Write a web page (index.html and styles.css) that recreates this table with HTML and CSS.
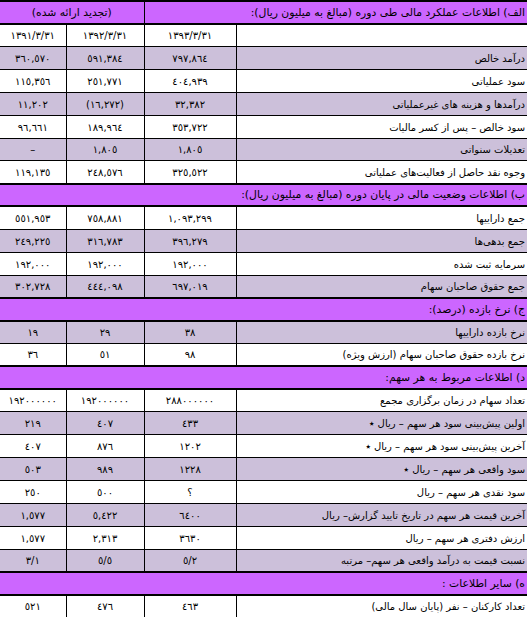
FILE: index.html
```html
<!DOCTYPE html>
<html lang="fa">
<head>
<meta charset="utf-8">
<title>گزارش مالی</title>
<link rel="stylesheet" href="styles.css">
</head>
<body>
<table class="sheet" dir="rtl">
  <colgroup>
    <col class="c-label">
    <col class="c-y1">
    <col class="c-y2">
    <col class="c-y3">
  </colgroup>
  <tbody>
    <tr class="hd first">
      <td colspan="2" class="lbl">الف) اطلاعات عملکرد مالی طی دوره (مبالغ به میلیون ریال):</td>
      <td colspan="2" class="num">(تجدید ارائه شده)</td>
    </tr>
    <tr class="row">
      <td class="lbl"></td><td class="num">١٣٩٣/٣/٣١</td><td class="num">١٣٩٢/٣/٣١</td><td class="num">١٣٩١/٣/٣١</td>
    </tr>
    <tr class="row alt">
      <td class="lbl">درآمد خالص</td><td class="num">٧٩٧,٨٦٤</td><td class="num">٥٩١,٣٨٤</td><td class="num">٣٦٠,٥٧٠</td>
    </tr>
    <tr class="row">
      <td class="lbl">سود عملیاتی</td><td class="num">٤٠٤,٩٣٩</td><td class="num">٢٥١,٧٧١</td><td class="num">١١٥,٣٥٦</td>
    </tr>
    <tr class="row alt">
      <td class="lbl">درآمدها و هزینه های غیرعملیاتی</td><td class="num">٣٢,٣٨٢</td><td class="num">(١٦,٢٧٢)</td><td class="num">١١,٢٠٢</td>
    </tr>
    <tr class="row">
      <td class="lbl">سود خالص – پس از کسر مالیات</td><td class="num">٣٥٣,٧٢٢</td><td class="num">١٨٩,٩٦٤</td><td class="num">٩٦,٦٦١</td>
    </tr>
    <tr class="row alt">
      <td class="lbl">تعدیلات سنواتی</td><td class="num">١,٨٠٥</td><td class="num">١,٨٠٥</td><td class="num">–</td>
    </tr>
    <tr class="row">
      <td class="lbl">وجوه نقد حاصل از فعالیت‌های عملیاتی</td><td class="num">٣٢٥,٥٢٢</td><td class="num">٢٤٨,٥٧٦</td><td class="num">١١٩,١٣٥</td>
    </tr>

    <tr class="hd">
      <td colspan="4" class="lbl">ب) اطلاعات وضعیت مالی در پایان دوره (مبالغ به میلیون ریال):</td>
    </tr>
    <tr class="row">
      <td class="lbl">جمع داراییها</td><td class="num">١,٠٩٣,٢٩٩</td><td class="num">٧٥٨,٨٨١</td><td class="num">٥٥١,٩٥٣</td>
    </tr>
    <tr class="row alt">
      <td class="lbl">جمع بدهی‌ها</td><td class="num">٣٩٦,٢٧٩</td><td class="num">٣١٦,٧٨٣</td><td class="num">٢٤٩,٢٢٥</td>
    </tr>
    <tr class="row">
      <td class="lbl">سرمایه ثبت شده</td><td class="num">١٩٢,٠٠٠</td><td class="num">١٩٢,٠٠٠</td><td class="num">١٩٢,٠٠٠</td>
    </tr>
    <tr class="row alt">
      <td class="lbl">جمع حقوق صاحبان سهام</td><td class="num">٦٩٧,٠١٩</td><td class="num">٤٤٤,٠٩٨</td><td class="num">٣٠٢,٧٢٨</td>
    </tr>

    <tr class="hd">
      <td colspan="4" class="lbl">ج) نرخ بازده (درصد):</td>
    </tr>
    <tr class="row alt">
      <td class="lbl">نرخ بازده داراییها</td><td class="num">٣٨</td><td class="num">٢٩</td><td class="num">١٩</td>
    </tr>
    <tr class="row">
      <td class="lbl">نرخ بازده حقوق صاحبان سهام (ارزش ویژه)</td><td class="num">٩٨</td><td class="num">٥١</td><td class="num">٣٦</td>
    </tr>

    <tr class="hd">
      <td colspan="4" class="lbl">د) اطلاعات مربوط به هر سهم:</td>
    </tr>
    <tr class="row">
      <td class="lbl">تعداد سهام در زمان برگزاری مجمع</td><td class="num">٢٨٨٠٠٠٠٠٠</td><td class="num">١٩٢٠٠٠٠٠٠</td><td class="num">١٩٢٠٠٠٠٠٠</td>
    </tr>
    <tr class="row alt">
      <td class="lbl">اولین پیش‌بینی سود هر سهم – ریال ٭</td><td class="num">٤٣٣</td><td class="num">٤٠٧</td><td class="num">٢١٩</td>
    </tr>
    <tr class="row">
      <td class="lbl">آخرین پیش‌بینی سود هر سهم – ریال ٭</td><td class="num">١٢٠٢</td><td class="num">٨٧٦</td><td class="num">٤٠٧</td>
    </tr>
    <tr class="row alt">
      <td class="lbl">سود واقعی هر سهم – ریال ٭</td><td class="num">١٢٢٨</td><td class="num">٩٨٩</td><td class="num">٥٠٣</td>
    </tr>
    <tr class="row">
      <td class="lbl">سود نقدی هر سهم – ریال</td><td class="num">؟</td><td class="num">٥٠٠</td><td class="num">٢٥٠</td>
    </tr>
    <tr class="row alt">
      <td class="lbl">آخرین قیمت هر سهم در تاریخ تایید گزارش– ریال</td><td class="num">٦٤٠٠</td><td class="num">٥,٤٢٢</td><td class="num">١,٥٧٧</td>
    </tr>
    <tr class="row">
      <td class="lbl">ارزش دفتری هر سهم – ریال</td><td class="num">٣٦٣٠</td><td class="num">٢,٣١٣</td><td class="num">١,٥٧٧</td>
    </tr>
    <tr class="row alt">
      <td class="lbl">نسبت قیمت به درآمد واقعی هر سهم– مرتبه</td><td class="num">٥/٢</td><td class="num">٥/٥</td><td class="num">٣/١</td>
    </tr>

    <tr class="hd">
      <td colspan="4" class="lbl">ه) سایر اطلاعات :</td>
    </tr>
    <tr class="row last">
      <td class="lbl">تعداد کارکنان – نفر (پایان سال مالی)</td><td class="num">٤٦٣</td><td class="num">٤٧٦</td><td class="num">٥٢١</td>
    </tr>
  </tbody>
</table>
</body>
</html>
```

FILE: styles.css
```css
html, body {
  margin: 0;
  padding: 0;
  background: #ffffff;
}

body {
  font-family: "DejaVu Sans", sans-serif;
  font-size: 10px;
  color: #000000;
}

.sheet {
  width: 527px;
  border-collapse: collapse;
  table-layout: fixed;
  direction: rtl;
}

.c-label { width: 291px; }
.c-y1 { width: 92px; }
.c-y2 { width: 78px; }
.c-y3 { width: 66px; }

.sheet td {
  border: 1px solid #000000;
  padding: 0 2px 4px 2px;
  vertical-align: bottom;
  white-space: nowrap;
  overflow: hidden;
  line-height: 12px;
}

.sheet tr td:first-child { border-right: none; }
.sheet tr td:last-child { border-left: none; }

.row { height: 22.9px; }
.row td { background: #ffffff; }
.row.alt td { background: #ccc0da; }

.hd { height: 22.6px; }
.hd td {
  background: #cc66ff;
  border-top: 2px solid #000000;
  border-bottom: 2px solid #000000;
  font-size: 10.8px;
}

.last td { border-bottom: 2px solid #000000; }

.lbl { text-align: right; }
.num { text-align: center; }
```
